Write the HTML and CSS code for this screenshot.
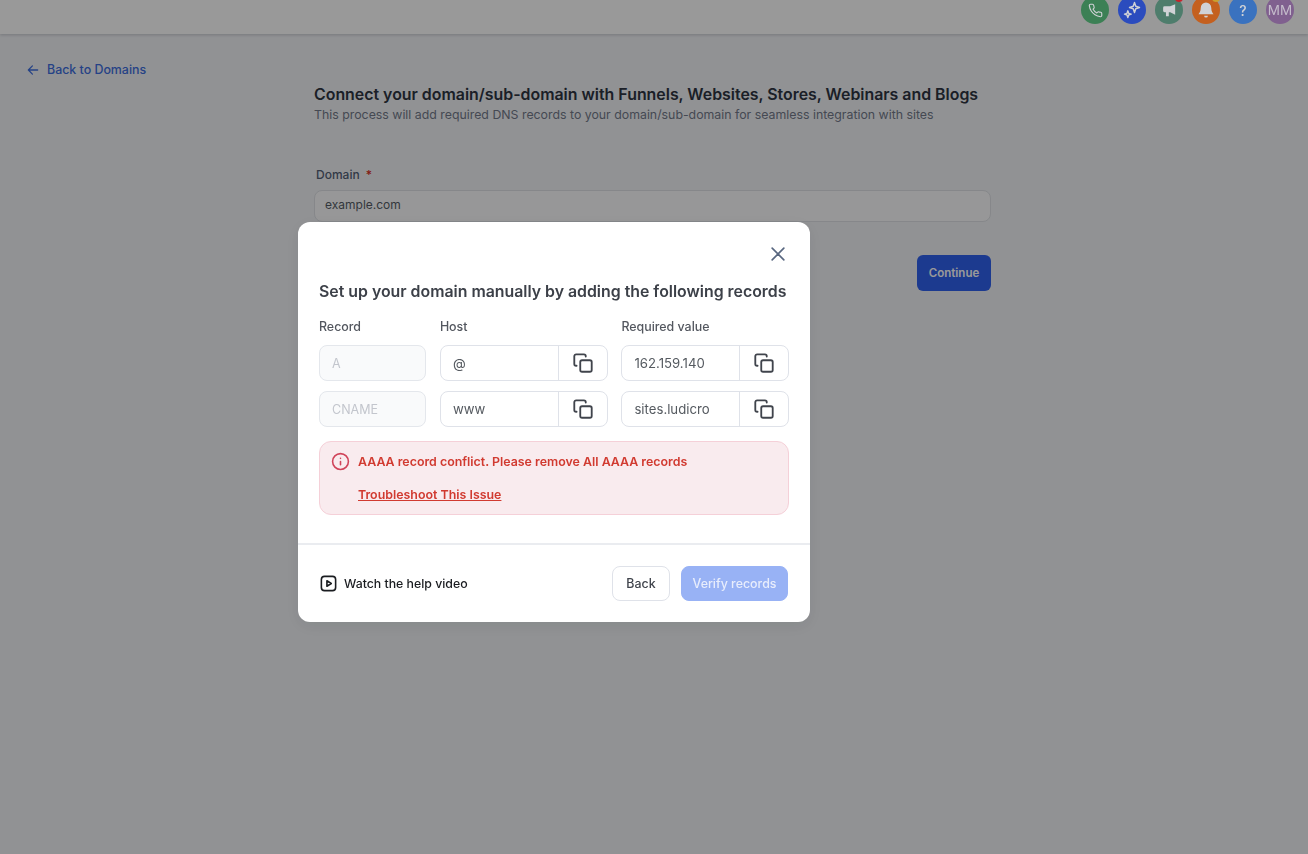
FILE: index.html
```html
<!DOCTYPE html>
<html lang="en">
<head>
<meta charset="UTF-8">
<meta name="viewport" content="width=device-width, initial-scale=1.0">
<title>Connect domain</title>
<link rel="stylesheet" href="styles.css">
</head>
<body>

<header class="topbar">
  <span class="round green">
    <svg width="15" height="15" viewBox="0 0 24 24" fill="none" stroke="currentColor" stroke-width="1.8" stroke-linecap="round" stroke-linejoin="round"><path d="M22 16.9v3a2 2 0 0 1-2.2 2 19.8 19.8 0 0 1-8.6-3.1 19.5 19.5 0 0 1-6-6A19.8 19.8 0 0 1 2.1 4.2 2 2 0 0 1 4.1 2h3a2 2 0 0 1 2 1.7c.1 1 .4 1.9.7 2.8a2 2 0 0 1-.5 2.1L8.100 9.900a16 16 0 0 0 6 6l1.300-1.300a2 2 0 0 1 2.100-.4c.9.300 1.800.6 2.800.7a2 2 0 0 1 1.700 2z"/></svg>
  </span>
  <span class="round blue">
    <svg width="20" height="20" viewBox="0 0 24 24" fill="none" stroke="currentColor" stroke-width="1.7" stroke-linejoin="round"><path d="M15 3l1.500 4.500L21 9l-4.500 1.500L15 15l-1.500-4.500L9 9l4.500-1.500z"/><path d="M7 13l1 3 3 1-3 1-1 3-1-3-3-1 3-1z"/></svg>
  </span>
  <span class="round teal">
    <svg width="17" height="17" viewBox="0 0 24 24" fill="currentColor"><path d="M20 3v15l-7-3.500H11v5.500H7v-5.500H5a2 2 0 0 1-2-2V8a2 2 0 0 1 2-2h8z"/></svg>
    <i class="dot red"></i>
  </span>
  <span class="round orange">
    <svg width="18" height="18" viewBox="0 0 24 24" fill="currentColor"><path d="M12 2a7 7 0 0 0-7 7c0 5-2 7-3 8.500h20c-1-1.500-3-3.500-3-8.500a7 7 0 0 0-7-7z"/><path d="M9.500 19.500h5a2.500 2.500 0 0 1-5 0z"/></svg>
    <i class="dot yellow"></i>
  </span>
  <span class="round sky">?</span>
  <span class="round purple">MM</span>
</header>

<a class="back-link" href="#">
  <svg width="14" height="14" viewBox="0 0 24 24" fill="none" stroke="currentColor" stroke-width="2.2" stroke-linecap="round" stroke-linejoin="round"><path d="M20 12H4M11 5l-7 7 7 7"/></svg>
  Back to Domains
</a>

<main class="connect">
  <h1>Connect your domain/sub-domain with Funnels, Websites, Stores, Webinars and Blogs</h1>
  <p class="sub">This process will add required DNS records to your domain/sub-domain for seamless integration with sites</p>
  <label class="domain-label">Domain <span class="star">*</span></label>
  <div class="domain-input">example.com</div>
  <div class="connect-actions"><button class="continue">Continue</button></div>
</main>

<div class="overlay">
  <div class="modal">
    <div class="modal-body">
      <div class="close-row">
        <svg width="20" height="20" viewBox="0 0 24 24" fill="none" stroke="#596780" stroke-width="2" stroke-linecap="round"><path d="M5 5l14 14M19 5L5 19"/></svg>
      </div>
      <h2>Set up your domain manually by adding the following records</h2>

      <div class="records">
        <span class="col-label">Record</span>
        <span class="col-label">Host</span>
        <span class="col-label">Required value</span>

        <div class="field disabled">A</div>
        <div class="field">
          <span class="value">@</span>
          <span class="copy"><svg width="22" height="22" viewBox="0 0 24 24" fill="none" stroke="#40444c" stroke-width="2" stroke-linecap="round" stroke-linejoin="round"><rect x="9" y="9" width="12.500" height="12.500" rx="2"/><path d="M5 15H4.500a2 2 0 0 1-2-2V4.500a2 2 0 0 1 2-2H13a2 2 0 0 1 2 2V5"/></svg></span>
        </div>
        <div class="field">
          <span class="value">162.159.140</span>
          <span class="copy"><svg width="22" height="22" viewBox="0 0 24 24" fill="none" stroke="#40444c" stroke-width="2" stroke-linecap="round" stroke-linejoin="round"><rect x="9" y="9" width="12.500" height="12.500" rx="2"/><path d="M5 15H4.500a2 2 0 0 1-2-2V4.500a2 2 0 0 1 2-2H13a2 2 0 0 1 2 2V5"/></svg></span>
        </div>

        <div class="field disabled">CNAME</div>
        <div class="field">
          <span class="value">www</span>
          <span class="copy"><svg width="22" height="22" viewBox="0 0 24 24" fill="none" stroke="#40444c" stroke-width="2" stroke-linecap="round" stroke-linejoin="round"><rect x="9" y="9" width="12.500" height="12.500" rx="2"/><path d="M5 15H4.500a2 2 0 0 1-2-2V4.500a2 2 0 0 1 2-2H13a2 2 0 0 1 2 2V5"/></svg></span>
        </div>
        <div class="field">
          <span class="value">sites.ludicro</span>
          <span class="copy"><svg width="22" height="22" viewBox="0 0 24 24" fill="none" stroke="#40444c" stroke-width="2" stroke-linecap="round" stroke-linejoin="round"><rect x="9" y="9" width="12.500" height="12.500" rx="2"/><path d="M5 15H4.500a2 2 0 0 1-2-2V4.500a2 2 0 0 1 2-2H13a2 2 0 0 1 2 2V5"/></svg></span>
        </div>
      </div>

      <div class="alert">
        <svg class="alert-icon" width="19" height="19" viewBox="0 0 24 24" fill="none" stroke="#d0445a" stroke-width="2" stroke-linecap="round"><circle cx="12" cy="12" r="10"/><path d="M12 16v-4M12 8h.01"/></svg>
        <div class="alert-text">
          <div>AAAA record conflict. Please remove All AAAA records</div>
          <a href="#">Troubleshoot This Issue</a>
        </div>
      </div>
    </div>

    <div class="modal-foot">
      <a class="help" href="#">
        <svg width="19" height="19" viewBox="0 0 24 24" fill="none" stroke="#1a1c20" stroke-width="2" stroke-linejoin="round"><rect x="3" y="3" width="18" height="18" rx="4"/><path d="M10 8.500l5.500 3.500-5.500 3.500z"/></svg>
        Watch the help video
      </a>
      <div class="foot-btns">
        <button class="btn-back">Back</button>
        <button class="btn-verify">Verify records</button>
      </div>
    </div>
  </div>
</div>

</body>
</html>
```

FILE: styles.css
```css
html, body {
  height: 100%;
}
body {
  margin: 0;
  background-color: #f2f4f7;
  font-family: Inter, "Liberation Sans", sans-serif;
  overflow: hidden;
}

/* top bar */
.topbar {
  height: 34px;
  background-color: #fff;
  box-shadow: 0 1px 3px rgba(16, 24, 40, 0.2);
  display: flex;
  justify-content: flex-end;
  gap: 9px;
  padding-right: 14px;
  overflow: hidden;
}
/* these sit above the overlay, so the colours are the ones seen on screen */
.round {
  width: 28px;
  height: 28px;
  margin-top: -4px;
  border-radius: 50%;
  color: #d0d2d6;
  display: flex;
  align-items: center;
  justify-content: center;
  font-size: 13px;
  position: relative;
  z-index: 20;
  flex-shrink: 0;
}
.green { background-color: #3c8055; }
.blue { background-color: #2b4cbe; }
.teal { background-color: #4e7d6c; }
.orange { background-color: #c4601f; }
.sky { background-color: #3a72bf; font-size: 14px; font-weight: 500; }
.purple { background-color: #80608f; font-size: 13.500px; color: #c4bccb; }
.dot {
  position: absolute;
  width: 8px;
  height: 8px;
  border-radius: 50%;
  top: -2px;
  right: 0;
}
.dot.red { background-color: #c8222a; }
.dot.yellow { background-color: #c9a030; }

/* page behind the modal */
.back-link {
  display: inline-flex;
  align-items: center;
  gap: 7px;
  margin: 28px 0 0 26px;
  height: 16px;
  font-size: 12.400px;
  line-height: 16px;
  font-weight: 500;
  color: #3f6fe0;
  text-decoration: none;
}
.connect {
  width: 677px;
  margin: 0 0 0 314px;
  padding-top: 4px;
}
.connect h1 {
  margin: 0;
  font-size: 15.900px;
  line-height: 20px;
  font-weight: 600;
  color: #2e3442;
}
.sub {
  margin: 2px 0 0;
  font-size: 12.340px;
  line-height: 16px;
  color: #737a8a;
}
.domain-label {
  display: block;
  margin: 44px 0 0 2px;
  font-size: 12px;
  line-height: 15px;
  font-weight: 500;
  color: #546075;
}
.star {
  color: #d92d20;
  margin-left: 3px;
}
.domain-input {
  margin-top: 8px;
  height: 30px;
  line-height: 28px;
  padding-left: 10px;
  border: 1px solid #dfe2e7;
  border-radius: 8px;
  background-color: #fcfcfd;
  font-size: 12px;
  color: #555c66;
}
.connect-actions {
  display: flex;
  justify-content: flex-end;
  margin-top: 33px;
}
.continue {
  width: 74px;
  height: 36px;
  border: none;
  border-radius: 6px;
  background-color: #3061ee;
  color: #fff;
  font-family: inherit;
  font-size: 11.500px;
  font-weight: 600;
}

/* modal */
.overlay {
  position: fixed;
  top: 0;
  left: 0;
  right: 0;
  bottom: 0;
  z-index: 10;
  background-color: rgba(0, 0, 0, 0.4);
  padding: 222px 0 0 298px;
  box-sizing: border-box;
}
.modal {
  width: 512px;
  height: 400px;
  background-color: #fff;
  border-radius: 12px;
  box-shadow: 0 4px 16px rgba(16, 24, 40, 0.08);
  display: flex;
  flex-direction: column;
}
.modal-body {
  padding: 0 21px;
  height: 321px;
  border-bottom: 2px solid #eaecf0;
}
.close-row {
  display: flex;
  justify-content: flex-end;
  padding: 22px 0 0;
  margin-right: 1px;
  height: 20px;
}
.modal h2 {
  margin: 16px 0 0;
  font-size: 15.870px;
  line-height: 24px;
  font-weight: 600;
  color: #3c4048;
  white-space: nowrap;
}
.records {
  display: grid;
  grid-template-columns: 107.400px 168px 168px;
  column-gap: 13.500px;
  row-gap: 10px;
  margin-top: 15px;
}
.col-label {
  font-size: 12.400px;
  line-height: 16px;
  font-weight: 500;
  color: #53575f;
}
.field {
  height: 36px;
  box-sizing: border-box;
  border: 1px solid #dfe2e9;
  border-radius: 8px;
  display: flex;
  align-items: center;
  font-size: 13.200px;
  color: #555a60;
}
.field.disabled {
  background-color: #f9fafb;
  border-color: #e4e7ec;
  color: #c3c6cd;
  padding-left: 12px;
  font-size: 12.500px;
}
.value {
  flex: 1;
  padding-left: 12px;
}
.copy {
  width: 48px;
  height: 100%;
  border-left: 1px solid #dfe2e9;
  display: flex;
  align-items: center;
  justify-content: center;
}
.alert {
  margin-top: 14px;
  height: 74px;
  box-sizing: border-box;
  border: 1px solid #f5d0d8;
  border-radius: 12px;
  background-color: #f9ebee;
  display: flex;
  gap: 8px;
  padding: 10px 0 0 11px;
}
.alert-text {
  padding-top: 1px;
  font-size: 12.400px;
  line-height: 18px;
  font-weight: 600;
  color: #d13a30;
}
.alert-text a {
  display: inline-block;
  margin-top: 15px;
  color: #d13a30;
  text-decoration: underline;
}
.modal-foot {
  flex: 1;
  display: flex;
  align-items: center;
  justify-content: space-between;
  padding: 0 22px 0 21px;
}
.help {
  display: flex;
  align-items: center;
  gap: 6px;
  font-size: 12.300px;
  font-weight: 500;
  color: #1a1c20;
  text-decoration: none;
}
.foot-btns {
  display: flex;
  gap: 11px;
}
.foot-btns button {
  height: 35px;
  border-radius: 8px;
  font-family: inherit;
  font-size: 12.400px;
  font-weight: 500;
}
.btn-back {
  width: 58px;
  background-color: #fff;
  border: 1px solid #dfe2e9;
  color: #40444c;
}
.btn-verify {
  width: 107px;
  background-color: #98b2f5;
  border: 1px solid #98b2f5;
  color: #e8edfc;
}
```
